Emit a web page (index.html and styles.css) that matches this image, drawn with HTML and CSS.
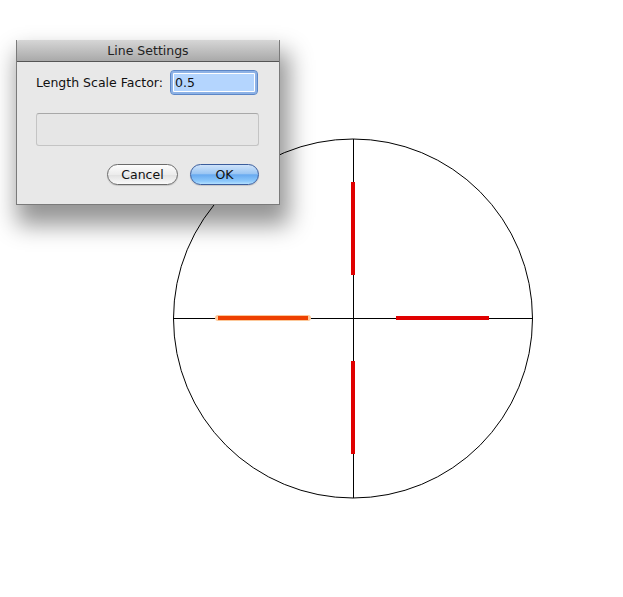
FILE: index.html
```html
<!DOCTYPE html>
<html lang="en">
<head>
    <meta charset="UTF-8">
    <meta name="viewport" content="width=device-width, initial-scale=1.0">
    <title>Line Settings</title>
    <link rel="stylesheet" href="styles.css">
</head>
<body>
    <div class="canvas">
        <svg class="drawing" width="623" height="597" viewBox="0 0 623 597">
            <circle cx="353" cy="318.5" r="179.5" fill="none" stroke="#000" stroke-width="1"/>
            <line x1="173" y1="318.5" x2="533" y2="318.5" stroke="#000" stroke-width="1"/>
            <line x1="353.5" y1="139" x2="353.5" y2="498" stroke="#000" stroke-width="1"/>
            <rect x="351" y="182" width="4" height="93" fill="#e00000"/>
            <rect x="351" y="361" width="4" height="93" fill="#e00000"/>
            <rect x="396" y="316" width="93" height="4" fill="#e00000"/>
            <line x1="218" y1="318" x2="308" y2="318" stroke="#fcc89a" stroke-width="6" stroke-linecap="round"/>
            <line x1="218" y1="318" x2="308" y2="318" stroke="#ee4000" stroke-width="4"/>
        </svg>

        <div class="dialog">
            <div class="dialog-title">Line Settings</div>
            <div class="dialog-body">
                <div class="field-row">
                    <label for="scaleFactor">Length Scale Factor:</label>
                    <input type="text" id="scaleFactor" class="field" value="0.5">
                </div>
                <div class="message-box"></div>
                <div class="button-row">
                    <button class="btn">Cancel</button>
                    <button class="btn btn-default">OK</button>
                </div>
            </div>
        </div>
    </div>
</body>
</html>
```

FILE: styles.css
```css
body {
    margin: 0;
    background: #fff;
    font-family: "DejaVu Sans", "Liberation Sans", sans-serif;
    font-size: 12.5px;
    color: #111;
}
.canvas {
    position: relative;
    width: 623px;
    height: 597px;
    overflow: hidden;
}
.drawing {
    display: block;
}
.dialog {
    position: absolute;
    left: 16px;
    top: 40px;
    width: 264px;
    height: 165px;
    box-sizing: border-box;
    background: #e8e8e8;
    border: 1px solid #7a7a7a;
    border-top: none;
    box-shadow: 5px 16px 22px 4px rgba(0, 0, 0, 0.42);
    display: flex;
    flex-direction: column;
}
.dialog-title {
    height: 22px;
    box-sizing: border-box;
    border-bottom: 1px solid #555;
    background: linear-gradient(#d6d6d6, #a9a9a9);
    text-align: center;
    line-height: 21px;
    font-size: 12.5px;
    color: #222;
    border-radius: 3px 3px 0 0;
}
.dialog-body {
    padding: 8px 20px 0 19px;
    display: flex;
    flex-direction: column;
}
.field-row {
    display: flex;
    align-items: center;
    height: 25px;
}
.field-row label {
    color: #111;
}
.field {
    margin-left: auto;
    margin-right: 1px;
    width: 88px;
    height: 25px;
    box-sizing: border-box;
    border: 1px solid #5c86c6;
    border-radius: 4px;
    padding: 0 0 0 4px;
    background: #b4d5fe;
    box-shadow: inset 0 0 0 2px #8db2e6, inset 0 0 0 3px #fff;
    font-family: inherit;
    font-size: 12.5px;
    color: #111;
}
.message-box {
    margin-top: 18px;
    height: 33px;
    box-sizing: border-box;
    border: 1px solid #c4c4c4;
    border-top-color: #a8a8a8;
    border-radius: 3px;
    background: #e6e6e6;
}
.button-row {
    margin-top: 18px;
    display: flex;
    justify-content: flex-end;
    gap: 12px;
}
.btn {
    width: 71px;
    height: 21px;
    box-sizing: border-box;
    border: 1px solid #6b6b6b;
    border-radius: 11px;
    background: linear-gradient(#fdfdfd, #ececec 50%, #e0e0e0 51%, #fafafa);
    font-family: inherit;
    font-size: 12.5px;
    color: #111;
    padding: 0;
    box-shadow: 0 1px 1px rgba(0, 0, 0, 0.15);
}
.btn-default {
    width: 69px;
    border-color: #3b5d9c;
    background: linear-gradient(#cfe3fa, #9bc6f3 45%, #68aaf0 52%, #8cc8fb 85%, #b4e0ff);
}
```
